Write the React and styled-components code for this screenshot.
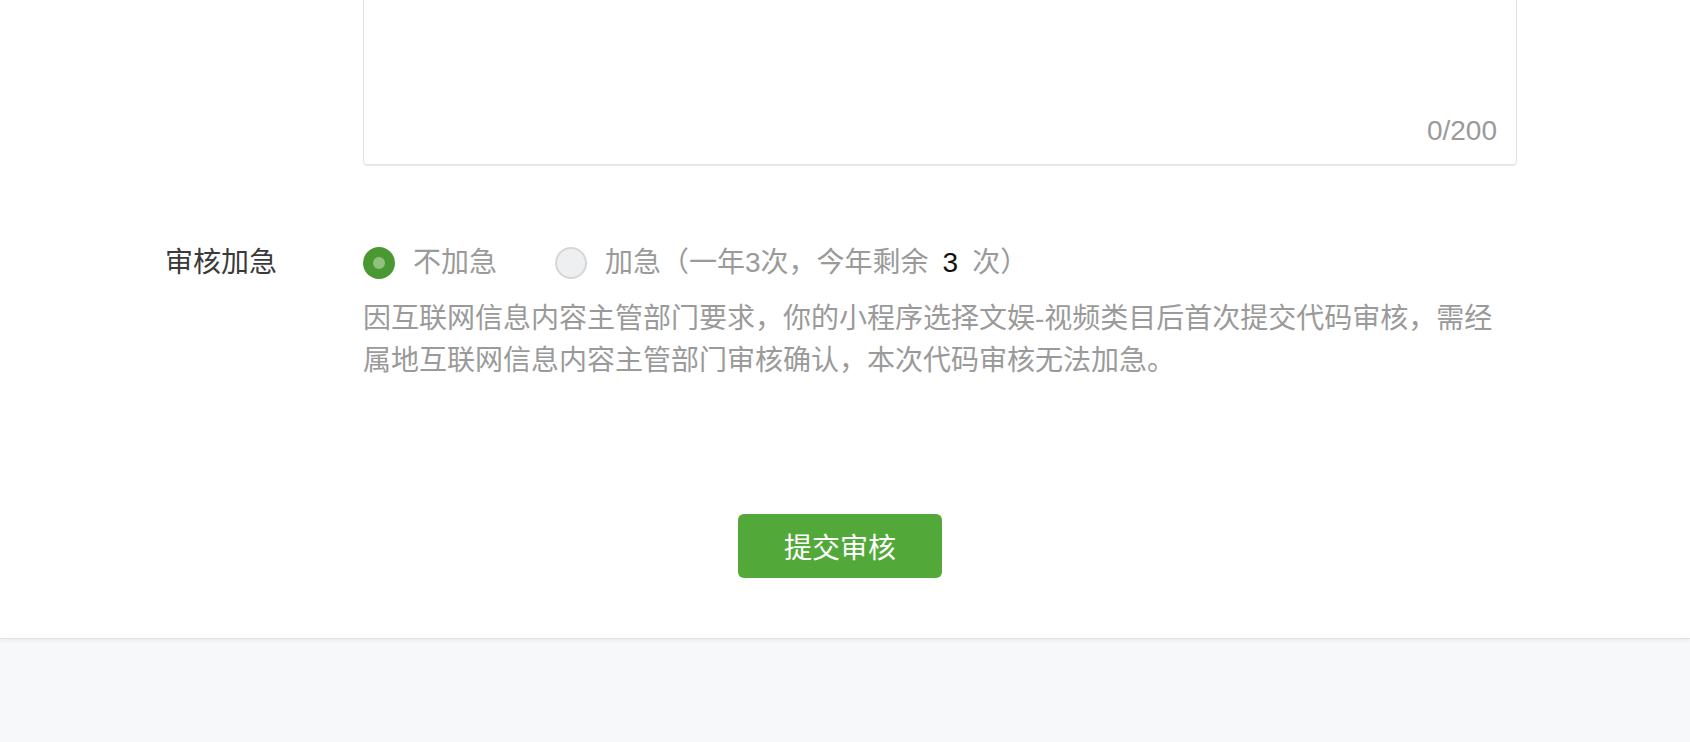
import React, { useState } from "react";
import styled, { createGlobalStyle } from "styled-components";

const Global = createGlobalStyle`
  html, body { margin: 0; padding: 0; background: #f7f8fa; overflow: hidden; }
  body { font-family: "Liberation Sans", "Noto Sans CJK SC", sans-serif; }
  * { box-sizing: border-box; }
`;

const Page = styled.div`
  width: 1690px;
  height: 742px;
  background: #f7f8fa;
  overflow: hidden;
`;

const Card = styled.div`
  margin-top: -40px;
  background: #ffffff;
  padding: 0 0 60px 0;
  border-bottom: 1px solid #dfe1e4;
  box-shadow: 0 2px 4px rgba(0, 0, 0, 0.05);
`;

const FormRow = styled.div`
  display: grid;
  grid-template-columns: 198px 1154px;
  padding-left: 165px;
  margin-top: ${(p) => p.$top || 0}px;
`;

const Label = styled.div`
  font-size: 28px;
  line-height: 42px;
  color: #3a3a3a;
`;

const TextBox = styled.div`
  position: relative;
  height: 205px;
  border: 1px solid #e1e4e8;
  border-radius: 4px;
  box-shadow: 0 1px 0 #e8eaed;
`;

const Counter = styled.span`
  position: absolute;
  right: 19px;
  bottom: 17px;
  font-size: 28px;
  line-height: 32px;
  color: #9a9a9a;
`;

const RadioGroup = styled.div`
  display: flex;
  align-items: center;
  gap: 58px;
  height: 42px;
`;

const RadioItem = styled.label`
  display: flex;
  align-items: center;
  gap: 18px;
  font-size: 28px;
  line-height: 42px;
  color: #9a9a9a;
  cursor: pointer;
`;

const Circle = styled.span`
  position: relative;
  width: 32px;
  height: 32px;
  border-radius: 50%;
  flex: none;
  background: ${(p) => (p.$checked ? "#4a9832" : "#eeeff1")};
  border: ${(p) => (p.$checked ? "none" : "2px solid #d5d6d8")};
  &::after {
    content: "";
    display: ${(p) => (p.$checked ? "block" : "none")};
    position: absolute;
    left: 10px;
    top: 10px;
    width: 12px;
    height: 12px;
    border-radius: 50%;
    background: #8fc27f;
  }
`;

const Strong = styled.span`
  color: #111;
  margin: 0 14px;
`;

const Hint = styled.p`
  margin: 14px 0 0 0;
  font-size: 28px;
  line-height: 42px;
  color: #9a9a9a;
`;

const ButtonBar = styled.div`
  display: flex;
  padding-left: 738px;
  margin-top: 132px;
`;

const SubmitButton = styled.button`
  width: 204px;
  height: 64px;
  border: none;
  border-radius: 6px;
  background: #52a93a;
  color: #ffffff;
  font-family: "Liberation Sans", "Noto Sans CJK SC", sans-serif;
  font-size: 28px;
  cursor: pointer;
`;

export default function App() {
  const [urgent, setUrgent] = useState(false);
  return (
    <Page>
      <Global />
      <Card>
        <FormRow>
          <div />
          <TextBox>
            <Counter>0/200</Counter>
          </TextBox>
        </FormRow>
        <FormRow $top={77}>
          <Label>审核加急</Label>
          <div>
            <RadioGroup>
              <RadioItem onClick={() => setUrgent(false)}>
                <Circle $checked={!urgent} />
                不加急
              </RadioItem>
              <RadioItem onClick={() => setUrgent(true)}>
                <Circle $checked={urgent} />
                <span>
                  加急（一年3次，今年剩余<Strong>3</Strong>次）
                </span>
              </RadioItem>
            </RadioGroup>
            <Hint>
              因互联网信息内容主管部门要求，你的小程序选择文娱-视频类目后首次提交代码审核，需经属地互联网信息内容主管部门审核确认，本次代码审核无法加急。
            </Hint>
          </div>
        </FormRow>
        <ButtonBar>
          <SubmitButton>提交审核</SubmitButton>
        </ButtonBar>
      </Card>
    </Page>
  );
}
